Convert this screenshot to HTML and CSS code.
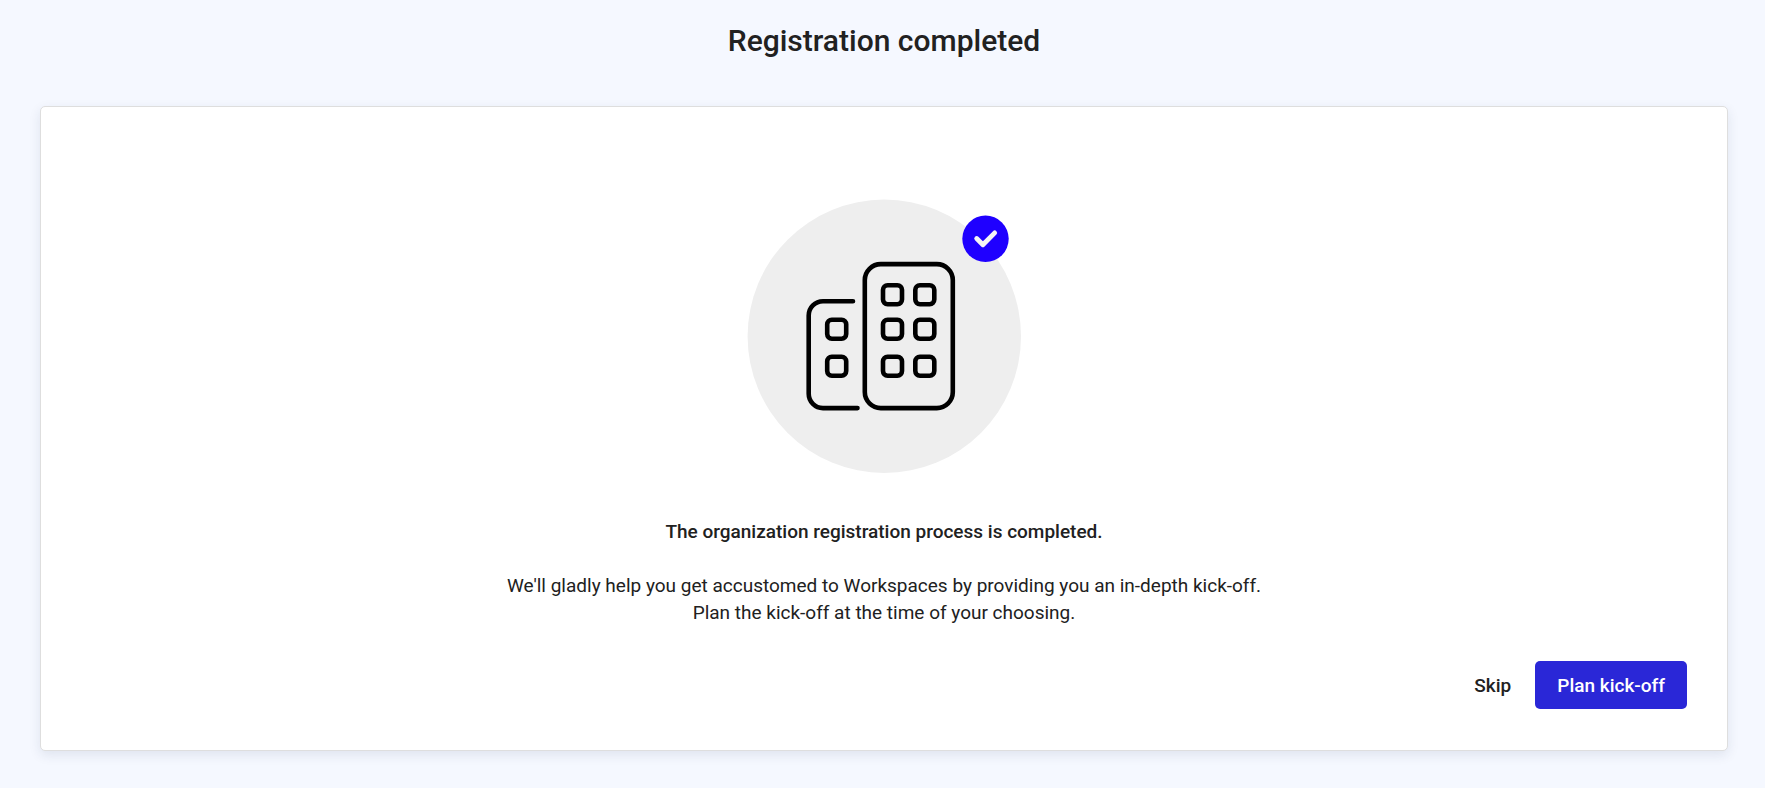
FILE: index.html
```html
<!DOCTYPE html>
<html lang="en">
<head>
    <meta charset="utf-8">
    <meta name="viewport" content="width=device-width, initial-scale=1">
    <title>Registration completed</title>
    <link rel="stylesheet" href="styles.css">
</head>
<body>
    <main class="page">
        <h1 class="page-title">Registration completed</h1>
        <section class="card">
            <svg class="illustration" viewBox="0 0 274 274" aria-hidden="true">
                <circle cx="137.3" cy="137.3" r="136.7" fill="#eee"/>
                <g fill="none" stroke="#000" stroke-width="4.6" stroke-linecap="round">
                    <!-- buildings -->
                    <rect x="117.8" y="65.1" width="88" height="144" rx="16"/>
                    <path d="M106 102.200H76a14.300 14.300 0 0 0-14.300 14.300v78.300A14.300 14.300 0 0 0 76 209.100H110.500"/>
                    <!-- windows -->
                    <rect x="80.200" y="120.700" width="19" height="19" rx="4.600"/>
                    <rect x="80.200" y="157.700" width="19" height="19" rx="4.600"/>
                    <rect x="136" y="86.200" width="19" height="19" rx="4.600"/>
                    <rect x="168.300" y="86.200" width="19" height="19" rx="4.600"/>
                    <rect x="136" y="120.700" width="19" height="19" rx="4.600"/>
                    <rect x="168.300" y="120.700" width="19" height="19" rx="4.600"/>
                    <rect x="136" y="157.700" width="19" height="19" rx="4.600"/>
                    <rect x="168.300" y="157.700" width="19" height="19" rx="4.600"/>
                </g>
                <circle cx="238.500" cy="39.800" r="23.200" fill="#1f00ff"/>
                <path d="M229.700 39.500l6.200 6.200 11.800-11.800" fill="none" stroke="#f5f5f5" stroke-width="4.800" stroke-linecap="round" stroke-linejoin="round"/>
            </svg>
            <h2 class="card-title">The organization registration process is completed.</h2>
            <p class="card-text">
                We'll gladly help you get accustomed to Workspaces by providing you an in-depth kick-off.<br>
                Plan the kick-off at the time of your choosing.
            </p>
            <div class="actions">
                <button class="btn btn-link" type="button">Skip</button>
                <button class="btn btn-primary" type="button">Plan kick-off</button>
            </div>
        </section>
    </main>
</body>
</html>
```
FILE: styles.css
```css
* {
    box-sizing: border-box;
}

body {
    margin: 0;
    background-color: #f5f8ff;
    color: #212121;
    font-family: Roboto, sans-serif;
    font-size: 19px;
    line-height: 27px;
}

.page {
    padding: 21px 37px 37px 40px;
}

.page-title {
    margin: 0 0 45px;
    font-size: 30px;
    font-weight: 500;
    line-height: 40px;
    text-align: center;
}

.card {
    display: flex;
    flex-direction: column;
    align-items: center;
    padding: 92px 40px 41px;
    background-color: #fff;
    border: 1px solid #dedede;
    border-radius: 5px;
    box-shadow: 0 4px 12px rgba(30, 50, 90, 0.1);
    text-align: center;
}

.illustration {
    width: 274px;
    height: 274px;
    margin-bottom: 45px;
}

.card-title {
    margin: 0 0 27px;
    font-size: 19px;
    font-weight: 500;
}

.card-text {
    margin: 0 0 35px;
}

.actions {
    display: flex;
    align-self: flex-end;
    gap: 2px;
}

.btn {
    height: 48px;
    padding: 0 22px;
    border: 0;
    border-radius: 5px;
    font-family: inherit;
    font-size: 19px;
    font-weight: 500;
    cursor: pointer;
}

.btn-link {
    background-color: transparent;
    color: #212121;
}

.btn-primary {
    background-color: #2a27d7;
    color: #fff;
}
```
